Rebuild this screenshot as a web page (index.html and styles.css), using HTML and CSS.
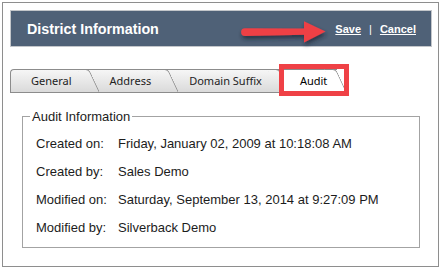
FILE: index.html
```html
<!DOCTYPE html>
<html lang="en">
<head>
    <meta charset="UTF-8">
    <meta name="viewport" content="width=device-width, initial-scale=1.0">
    <title>District Information</title>
    <link rel="stylesheet" href="styles.css">
</head>
<body>

    <div class="window">
        <div class="titlebar">
            <h1 class="title">District Information</h1>
            <!-- callout arrow pointing at Save -->
            <svg class="callout-arrow" viewBox="0 0 96 36" aria-hidden="true">
                <defs>
                    <filter id="arrow-shadow" x="-20%" y="-40%" width="140%" height="200%">
                        <feDropShadow dx="1" dy="3" stdDeviation="2" flood-color="#1b2430" flood-opacity="0.7"/>
                    </filter>
                </defs>
                <g filter="url(#arrow-shadow)" fill="#ef3f45">
                    <path d="M9 14.2 L70 14.5 L70 20.8 L9 22 A3.9 3.9 0 0 1 9 14.2 Z"/>
                    <polygon points="68,7.3 89.5,17.4 68,28.4"/>
                </g>
            </svg>
            <div class="actions">
                <a href="#">Save</a>
                <span class="sep">|</span>
                <a href="#">Cancel</a>
            </div>
        </div>

        <ul class="tabs">
            <li class="tab">General</li>
            <li class="tab">Address</li>
            <li class="tab">Domain Suffix</li>
            <li class="tab active">Audit<span class="highlight"></span></li>
        </ul>

        <fieldset class="audit-box">
            <legend>Audit Information</legend>
            <dl class="audit-grid">
                <dt>Created on:</dt>
                <dd>Friday, January 02, 2009 at 10:18:08 AM</dd>
                <dt>Created by:</dt>
                <dd>Sales Demo</dd>
                <dt>Modified on:</dt>
                <dd>Saturday, September 13, 2014 at 9:27:09 PM</dd>
                <dt>Modified by:</dt>
                <dd>Silverback Demo</dd>
            </dl>
        </fieldset>
    </div>

</body>
</html>
```

FILE: styles.css
```css
* {
    box-sizing: border-box;
}
body {
    margin: 0;
    background: #fff;
    font-family: "Liberation Sans", Arial, sans-serif;
    color: #1c1c1c;
}
.window {
    margin: 2px;
    height: 265px;
    border: 1px solid #8e8e8e;
    padding: 7px 6px 0 7px;
}
.titlebar {
    position: relative;
    height: 37px;
    background: #4f6177;
    border: 1px solid #c3c6ca;
    display: flex;
    align-items: center;
    justify-content: space-between;
    padding: 0 15px 0 16px;
}
.title {
    margin: 0;
    font-size: 14.3px;
    font-weight: bold;
    color: #fff;
}
.callout-arrow {
    position: absolute;
    left: 225px;
    top: 3px;
    width: 96px;
    height: 36px;
}
.actions {
    display: flex;
    gap: 8px;
    font-size: 11px;
    font-weight: bold;
    color: #fff;
}
.actions a {
    color: #fff;
}
.actions .sep {
    font-weight: normal;
}

.tabs {
    list-style: none;
    margin: 22px 0 0;
    padding: 0;
    display: flex;
    height: 24px;
}
.tab {
    position: relative;
    height: 24px;
    padding: 0 18px 0 20px;
    background: linear-gradient(#f6f6f6, #dadada);
    border: 1px solid #8c8c8c;
    border-left: 0;
    border-right: 0;
    font-family: "Noto Sans", sans-serif;
    font-size: 11px;
    line-height: 22px;
    color: #222;
}
.tab:first-child {
    border-left: 1px solid #8c8c8c;
    border-radius: 4px 0 0 0;
}
.tab::after {
    content: "";
    position: absolute;
    top: -1px;
    bottom: -1px;
    right: 1px;
    width: 11px;
    background: inherit;
    border: 1px solid #8c8c8c;
    border-left: 0;
    border-radius: 0 4px 0 0;
    transform: skewX(25deg);
    transform-origin: top left;
}
.tab:nth-child(1) { z-index: 4; }
.tab:nth-child(2) { z-index: 3; }
.tab:nth-child(3) { z-index: 2; }
.tab.active {
    z-index: 5;
    background: #fff;
    border-bottom: 0;
    padding-right: 10px;
    color: #000;
}
.tab.active::after {
    background: #fff;
    border-bottom: 0;
}
.highlight {
    position: absolute;
    left: -1px;
    top: -6px;
    width: 70px;
    height: 32px;
    border: 5px solid #ef4146;
    z-index: 10;
}

.audit-box {
    margin: 16px 12px 0;
    padding: 0 10px 5px 7px;
    border: 1px solid #a3a3a3;
    font-size: 13px;
}
.audit-box legend {
    padding: 0 2px;
    line-height: 15px;
}
.audit-grid {
    display: grid;
    grid-template-columns: 82px 1fr;
    grid-auto-rows: 28px;
    align-items: center;
    margin: 6px 0 0 6px;
}
.audit-grid dt,
.audit-grid dd {
    margin: 0;
    line-height: 28px;
}
```
